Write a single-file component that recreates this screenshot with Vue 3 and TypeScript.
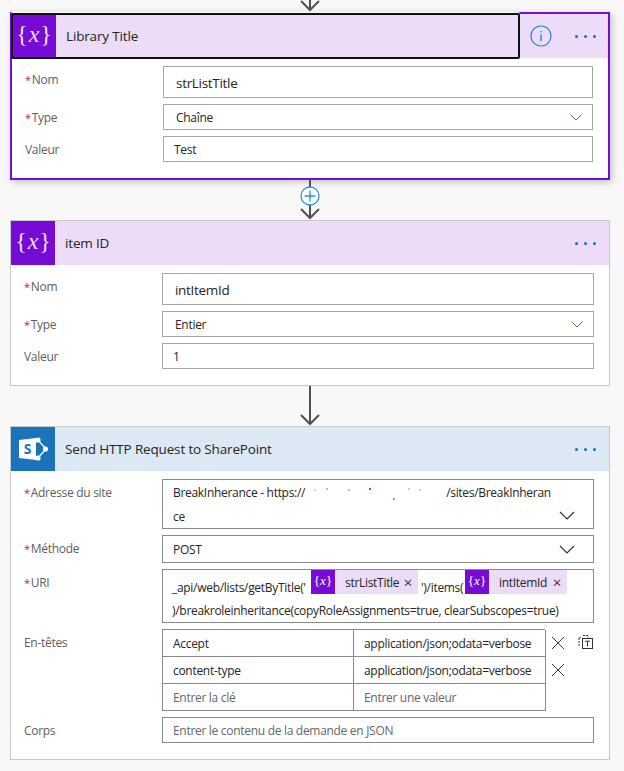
<template>
  <div class="canvas">
    <div class="link first">
      <svg class="arrow" width="24" height="12" viewBox="0 0 24 12">
        <path d="M12 0V10M3 1L12 10L21 1" />
      </svg>
    </div>

    <div class="card selected">
      <div class="header purple">
        <div class="icon var-icon"><span class="brace">{</span><i>x</i><span class="brace">}</span></div>
        <div class="title">Library Title</div>
        <svg class="info" width="24" height="24" viewBox="0 0 24 24">
          <circle cx="12" cy="12" r="10" />
          <path d="M12 10.5V17M12 7V8.6" />
        </svg>
        <div class="dots"><span></span><span></span><span></span></div>
        <div class="focus-ring"></div>
      </div>
      <div class="body">
        <div class="label"><b>*</b>Nom</div>
        <div class="input big indent">strListTitle</div>
        <div class="label"><b>*</b>Type</div>
        <div class="input indent with-chevron">Chaîne
          <svg class="chev small" width="12" height="7" viewBox="0 0 12 7"><path d="M0.5 0.5L6 6L11.5 0.5" /></svg>
        </div>
        <div class="label">Valeur</div>
        <div class="input">Test</div>
      </div>
    </div>

    <div class="link plus">
      <svg class="arrow" width="24" height="40" viewBox="0 0 24 40">
        <path d="M12 0V38M3 29L12 38L21 29" />
      </svg>
      <svg class="add" width="20" height="20" viewBox="0 0 20 20">
        <circle cx="10" cy="10" r="9" />
        <path d="M10 4.5V15.5M4.5 10H15.5" />
      </svg>
    </div>

    <div class="card">
      <div class="header purple">
        <div class="icon var-icon"><span class="brace">{</span><i>x</i><span class="brace">}</span></div>
        <div class="title">item ID</div>
        <div class="dots"><span></span><span></span><span></span></div>
      </div>
      <div class="body">
        <div class="label"><b>*</b>Nom</div>
        <div class="input big indent">intItemId</div>
        <div class="label"><b>*</b>Type</div>
        <div class="input indent with-chevron">Entier
          <svg class="chev small" width="12" height="7" viewBox="0 0 12 7"><path d="M0.5 0.5L6 6L11.5 0.5" /></svg>
        </div>
        <div class="label">Valeur</div>
        <div class="input">1</div>
      </div>
    </div>

    <div class="link">
      <svg class="arrow" width="24" height="40" viewBox="0 0 24 40">
        <path d="M12 0V38M3 29L12 38L21 29" />
      </svg>
    </div>

    <div class="card">
      <div class="header blue">
        <div class="icon sp-icon">
          <svg width="32" height="28" viewBox="0 0 32 28">
            <path class="sp-nodes" d="M15 8L21 5L29 14L21 23L15 20" />
            <circle cx="21" cy="5" r="2.6" fill="#fff" />
            <circle cx="28.5" cy="14" r="2.6" fill="#fff" />
            <circle cx="21" cy="23" r="2.6" fill="#fff" />
            <path d="M2 5L19 3V25L2 23Z" fill="#fff" />
            <text x="10.5" y="19" text-anchor="middle" class="sp-s">S</text>
          </svg>
        </div>
        <div class="title">Send HTTP Request to SharePoint</div>
        <div class="dots"><span></span><span></span><span></span></div>
      </div>
      <div class="body">
        <div class="label"><b>*</b>Adresse du site</div>
        <div class="input site with-chevron">
          <div class="site-line">BreakInherance - https://<span class="masked"><i v-for="s in specks" :key="s.l" :style="{ left: s.l + 'px', top: s.t + 'px', background: s.c }"></i></span>/sites/BreakInheran</div>
          <div class="site-line">ce</div>
          <svg class="chev" width="16" height="9" viewBox="0 0 16 9"><path d="M1 1L8 8L15 1" /></svg>
        </div>
        <div class="label"><b>*</b>Méthode</div>
        <div class="input method with-chevron">POST
          <svg class="chev" width="16" height="9" viewBox="0 0 16 9"><path d="M1 1L8 8L15 1" /></svg>
        </div>
        <div class="label"><b>*</b>URI</div>
        <div class="input uri">
          <div class="uri-line">
            <span class="uri-start">_api/web/lists/getByTitle('</span>
            <span class="token first-token">
              <span class="token-icon">{<i>x</i>}</span>
              <span class="token-name">strListTitle</span>
              <span class="token-x">×</span>
            </span>
            <span class="after-token">')/items(</span>
            <span class="token second-token">
              <span class="token-icon">{<i>x</i>}</span>
              <span class="token-name">intItemId</span>
              <span class="token-x">×</span>
            </span>
          </div>
          <div class="uri-tail">)/breakroleinheritance(copyRoleAssignments=true, clearSubscopes=true)</div>
        </div>
        <div class="label">En-têtes</div>
        <div class="headers-row">
          <div class="kv">
            <template v-for="r in headerRows" :key="r.k">
              <div class="cell" :class="{ hint: r.hint }">{{ r.k }}</div>
              <div class="cell" :class="{ hint: r.hint }">{{ r.v }}</div>
            </template>
          </div>
          <div class="kv-actions">
            <div class="action-row">
              <svg width="14" height="14" viewBox="0 0 14 14" class="del"><path d="M1 1L13 13M13 1L1 13" /></svg>
              <svg width="15" height="15" viewBox="0 0 15 15" class="mode">
                <path class="dash" d="M1 12V3.5H3M5 1.5H10V3.5M1 3.5" />
                <rect x="4.5" y="4.5" width="10" height="10" />
                <path d="M7 7.2H12M9.5 7.2V12.5" />
              </svg>
            </div>
            <div class="action-row">
              <svg width="14" height="14" viewBox="0 0 14 14" class="del"><path d="M1 1L13 13M13 1L1 13" /></svg>
            </div>
          </div>
        </div>
        <div class="label">Corps</div>
        <div class="input hint">Entrer le contenu de la demande en JSON</div>
      </div>
    </div>
  </div>
</template>

<script setup lang="ts">
const headerRows = [
  { k: 'Accept', v: 'application/json;odata=verbose', hint: false },
  { k: 'content-type', v: 'application/json;odata=verbose', hint: false },
  { k: 'Entrer la clé', v: 'Entrer une valeur', hint: true },
]

// bits of the url that survived the redaction
const specks = [
  { l: 9, t: 4, c: '#c9d4e8' },
  { l: 21, t: 3, c: '#b8b8c8' },
  { l: 43, t: 4, c: '#a9c4e4' },
  { l: 64, t: 3, c: '#9a3fa0' },
  { l: 88, t: 13, c: '#6f9fd0' },
  { l: 103, t: 3, c: '#b8d0e8' },
  { l: 114, t: 4, c: '#c8d8e8' },
]
</script>

<style>
html,
body {
  background: #f8f8f8;
}
</style>

<style scoped>
.canvas {
  width: 624px;
  height: 771px;
  overflow: hidden;
  background: #f8f8f8;
  padding-left: 10px;
  box-sizing: border-box;
  font-family: "Open Sans", "Noto Sans", sans-serif;
  font-size: 12px;
  letter-spacing: -0.3px;
  color: #252423;
}

.link {
  width: 600px;
  height: 40px;
  display: flex;
  justify-content: center;
  position: relative;
}

.link.first {
  height: 12px;
}

.arrow path {
  fill: none;
  stroke: #505050;
  stroke-width: 2;
}

.add {
  position: absolute;
  left: 290px;
  top: 6px;
}

.add circle {
  fill: #fff;
  stroke: #2f8fe0;
  stroke-width: 1.3;
}

.add path {
  stroke: #2f8fe0;
  stroke-width: 1.3;
}

.card {
  width: 600px;
  box-sizing: border-box;
  background: #fff;
  border: 1px solid #c8c8c8;
}

.card.selected {
  border: 2px solid #770bd6;
  box-shadow: 2px 2px 7px rgba(0, 0, 0, 0.22);
}

.header {
  height: 44px;
  display: flex;
  align-items: center;
  position: relative;
}

.header.purple {
  background: #ecdcf8;
}

.header.blue {
  background: #dce8f4;
}

.icon {
  width: 44px;
  height: 44px;
  flex: none;
  display: flex;
  align-items: center;
  justify-content: center;
  color: #fff;
}

.var-icon {
  background: #770bd6;
  font-family: "Liberation Serif", serif;
  font-size: 24px;
  letter-spacing: 0;
  color: rgba(255, 255, 255, 0.88);
  padding-bottom: 3px;
  box-sizing: border-box;
}

.var-icon i {
  margin: 0 1px;
}

.sp-icon {
  background: #1b74bb;
}

.sp-nodes {
  fill: none;
  stroke: #fff;
  stroke-width: 1.4;
}

.sp-s {
  font-family: "Open Sans", sans-serif;
  font-size: 14px;
  font-weight: 700;
  fill: #1b74bb;
}

.title {
  margin-left: 10px;
  flex: 1;
  font-size: 13.5px;
  letter-spacing: -0.16px;
  color: #252423;
}

.info {
  margin-right: 22px;
}

.info circle {
  fill: none;
  stroke: #1f86e0;
  stroke-width: 1.2;
}

.info path {
  fill: none;
  stroke: #1f86e0;
  stroke-width: 1.4;
}

.dots {
  display: flex;
  gap: 6px;
  margin-right: 13px;
}

.selected .dots {
  margin-right: 12px;
}

.dots span {
  width: 3px;
  height: 3px;
  border-radius: 50%;
  background: #0f6fd8;
}

/* keyboard focus frame from the designer canvas */
.focus-ring {
  position: absolute;
  left: -1px;
  top: -1px;
  width: 509px;
  height: 46px;
  box-sizing: border-box;
  border: 2px solid #111;
  border-radius: 2px;
  box-shadow: 0 -1px 0 #fff;
}

.body {
  display: grid;
  grid-template-columns: 138px minmax(0, 1fr);
  row-gap: 6px;
  padding: 8px 15px 16px 13px;
}

.label {
  font-size: 12px;
  color: #605e5c;
  line-height: 16px;
  padding-top: 6px;
}

.label b {
  color: #d0103a;
  font-size: 11px;
  font-weight: 400;
  margin-right: 1px;
}

.input {
  position: relative;
  box-sizing: border-box;
  height: 26px;
  border: 1px solid #a6a6a6;
  padding: 0 10px;
  display: flex;
  align-items: center;
  font-size: 12px;
  color: #252423;
  background: #fff;
}

.input.big {
  height: 32px;
  font-size: 13.5px;
}

.input.indent {
  padding-left: 12px;
  padding-top: 1px;
}

.input.hint {
  border-color: #8a8a8a;
}

.input.hint,
.cell.hint {
  color: #666;
}

.chev {
  position: absolute;
  right: 10px;
  top: 50%;
  margin-top: -3px;
}

.chev path {
  fill: none;
  stroke: #333;
  stroke-width: 1.2;
}

.chev.small path {
  stroke: #5a7a50;
  stroke-width: 1;
}

.input.site {
  height: 50px;
  display: block;
  padding: 1px 10px 0;
  line-height: 24px;
  border-color: #8a8a8a;
}

.site-line {
  height: 24px;
  white-space: nowrap;
}

.input.site .chev,
.input.method .chev {
  right: 18px;
}

.site .chev {
  top: 31px;
  margin: 0;
}

.masked {
  display: inline-block;
  position: relative;
  width: 141px;
  height: 16px;
  vertical-align: top;
  margin-top: 4px;
}

.masked i {
  position: absolute;
  width: 1.5px;
  height: 2px;
}

.input.method {
  height: 28px;
  border-color: #8a8a8a;
}

.method .chev {
  margin-top: -4px;
}

.input.uri {
  height: 54px;
  display: block;
  padding: 0 9px;
  border-color: #8a8a8a;
}

.uri-line {
  display: flex;
  height: 25px;
  align-items: flex-start;
  white-space: nowrap;
}

.uri-start {
  width: 139px;
  line-height: 24px;
  padding-top: 6px;
}

.after-token {
  width: 44px;
  line-height: 24px;
  padding-top: 6px;
  margin-left: 3px;
}

.token {
  display: flex;
  align-items: center;
  height: 24px;
  background: #ecdcf8;
  flex: none;
}

.first-token {
  width: 107px;
}

.second-token {
  width: 102px;
}

.token-icon {
  width: 24px;
  height: 24px;
  background: #770bd6;
  color: #fff;
  font-family: "Liberation Serif", serif;
  font-size: 13px;
  letter-spacing: 0;
  display: flex;
  align-items: center;
  justify-content: center;
  padding-bottom: 2px;
  box-sizing: border-box;
}

.token-name {
  margin-left: 10px;
}

.token-x {
  margin-left: auto;
  margin-right: 6px;
  font-size: 15px;
  line-height: 1;
  color: #333;
}

.uri-tail {
  line-height: 32px;
  white-space: nowrap;
}

.headers-row {
  display: flex;
}

.kv {
  width: 383px;
  display: grid;
  grid-template-columns: 191px 192px;
  grid-auto-rows: 27px;
  box-sizing: border-box;
  border-top: 1px solid #8a8a8a;
  border-left: 1px solid #8a8a8a;
  height: 82px;
}

.cell {
  box-sizing: border-box;
  border-right: 1px solid #8a8a8a;
  border-bottom: 1px solid #8a8a8a;
  padding: 0 10px;
  display: flex;
  align-items: center;
  white-space: nowrap;
  background: #fff;
}

.kv-actions {
  margin-left: 6px;
}

.action-row {
  height: 27px;
  display: flex;
  align-items: center;
  gap: 13px;
}

.del path {
  fill: none;
  stroke: #3a3a3a;
  stroke-width: 1;
}

.mode {
  margin-top: -2px;
}

.mode rect,
.mode path {
  fill: none;
  stroke: #333;
  stroke-width: 1;
}

.mode .dash {
  stroke-dasharray: 2 1;
}
</style>
